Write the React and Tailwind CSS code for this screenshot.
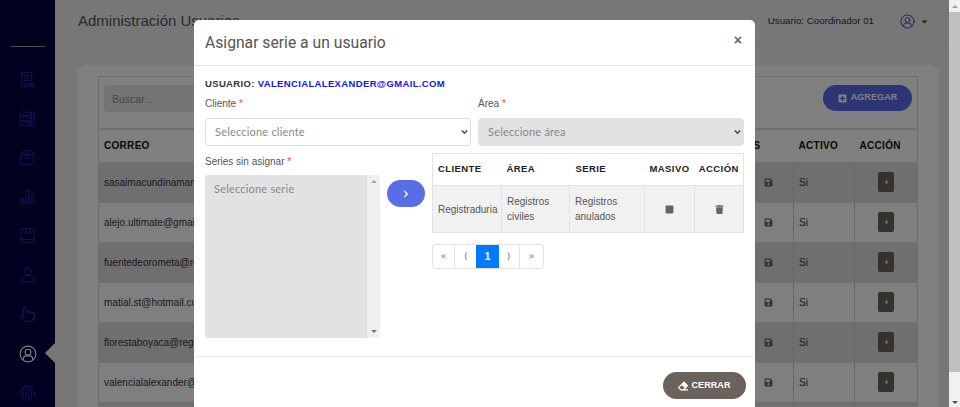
import { Pointer, Fingerprint } from 'lucide-react'
import { FaEraser, FaPlusSquare, FaTrash, FaStop, FaSave, FaCaretLeft, FaChevronRight, FaCaretDown } from 'react-icons/fa'

const users = [
  'sasaimacundinamarca@registraduria.gov.co',
  'alejo.ultimate@gmail.com',
  'fuentedeorometa@registraduria.gov.co',
  'matial.st@hotmail.com',
  'florestaboyaca@registraduria.gov.co',
  'valencialalexander@gmail.com',
  'soporte@registraduria.gov.co',
]

function Outline({ className, sw = 1.3, children }) {
  return (
    <svg className={className} viewBox="0 0 24 24" fill="none" stroke="currentColor" strokeWidth={sw} strokeLinejoin="round" strokeLinecap="round">
      {children}
    </svg>
  )
}

function ScrollIcon({ className }) {
  return (
    <Outline className={className}>
      <path d="M4 2h14v16.5M4 2v17a3 3 0 0 0 3 3h14a0 0 0 0 0 0 0v-3.500H8" />
      <path d="M7.500 6.500h7M7.500 10h7M7.500 13.500h7" />
    </Outline>
  )
}

function RowsIcon({ className }) {
  return (
    <Outline className={className}>
      <rect x="2" y="3" width="14" height="5" />
      <rect x="2" y="10" width="14" height="5" />
      <rect x="2" y="17" width="14" height="5" />
      <rect x="18.500" y="3" width="3" height="19" />
    </Outline>
  )
}

function BoxIcon({ className }) {
  return (
    <Outline className={className}>
      <path d="M3 8l3.500-5.500h11L21 8v13.500H3z" />
      <path d="M3 8h18M12 2.500V8M9 8v5h6V8" />
    </Outline>
  )
}

function BarsIcon({ className }) {
  return (
    <Outline className={className}>
      <rect x="3" y="15" width="3.600" height="7" />
      <rect x="10.200" y="3" width="3.600" height="19" />
      <rect x="17.400" y="9" width="3.600" height="13" />
    </Outline>
  )
}

function BookIcon({ className }) {
  return (
    <Outline className={className}>
      <path d="M3 2.500h18v19H5a2 2 0 0 1-2-2z" />
      <path d="M3 17.500h18M9 2.500V10l3-2 3 2V2.500" />
    </Outline>
  )
}

function PersonIcon({ className }) {
  return (
    <Outline className={className}>
      <circle cx="12" cy="7.500" r="5" />
      <path d="M3 22v-2.500a6 6 0 0 1 6-6h6a6 6 0 0 1 6 6V22z" />
    </Outline>
  )
}

function AccountIcon({ className, sw = 1.5 }) {
  return (
    <Outline className={className} sw={sw}>
      <circle cx="12" cy="12" r="10.500" />
      <circle cx="12" cy="9.500" r="3.800" />
      <path d="M5.800 19.500v-1a3.800 3.800 0 0 1 3.800-4h4.800a3.800 3.800 0 0 1 3.800 4v1" />
    </Outline>
  )
}

function Sidebar() {
  const icon = 'w-[17px] h-[17px] text-[#2a2ab8]'
  return (
    <aside className="w-[55px] shrink-0 bg-[#00003e] flex flex-col items-center h-full relative">
      <div className="mt-[46px] w-[34px] h-px bg-[#9a9a9a] mb-[24px]" />
      <div className="flex flex-col items-center gap-[22.1px]">
        <ScrollIcon className={icon} />
        <RowsIcon className={icon} />
        <BoxIcon className={icon} />
        <BarsIcon className={icon} />
        <BookIcon className={icon} />
        <PersonIcon className={icon} />
        <Pointer className={icon} strokeWidth={1.5} />
        <AccountIcon className="w-[18px] h-[18px] text-white" />
        <Fingerprint className={icon} strokeWidth={1.5} />
      </div>
      {/* notch of the active item */}
      <div className="absolute right-0 top-[343px] w-0 h-0 border-y-[10px] border-y-transparent border-r-[10px] border-r-[#efefef]" />
    </aside>
  )
}

function UsersCard() {
  return (
    <div className="mt-[21px] ml-[22px] mr-[10px] bg-white rounded-t-[10px] px-[21px] pt-[11px]">
      <div className="border border-[#dcdcdc] border-b-2 h-[54px] flex items-start justify-between pt-[8px] pl-[5px] pr-[5px]">
        <input placeholder="Buscar..." className="w-[300px] h-[27px] bg-[#e9e9e9] rounded px-2 text-[10.5px] placeholder:text-[#8a8a8a]" />
        <button className="w-[89px] h-[26px] rounded-full bg-[#5a6de8] text-white text-[9px] font-bold tracking-[0.1px] flex items-center justify-center gap-[4px]">
          <FaPlusSquare className="w-[9px] h-[9px]" /> AGREGAR
        </button>
      </div>
      <table className="w-[819px] table-fixed border-collapse border-x border-[#dcdcdc] text-[10px] text-[#333]">
        <colgroup>
          <col className="w-[602px]" />
          <col className="w-[93px]" />
          <col className="w-[61px]" />
          <col className="w-[63px]" />
        </colgroup>
        <thead>
          <tr className="h-[32px] text-[#111] font-bold tracking-[0.3px]">
            <th className="text-left pl-[5px]">CORREO</th>
            <th className="text-right pr-[33px]">SERIES</th>
            <th className="text-left pl-[5px]">ACTIVO</th>
            <th className="text-left pl-[5px]">ACCIÓN</th>
          </tr>
        </thead>
        <tbody>
          {users.map((u, i) => (
            <tr key={u} className={`h-[40px] border-t border-[#dcdcdc] ${i % 2 === 0 ? 'bg-[#dedede]' : 'bg-white'}`}>
              <td className="pl-[5px]">{u}</td>
              <td className="pr-[20px] border-r border-[#d2d2d2]">
                <FaSave className="w-[9px] h-[9px] ml-auto text-[#6b635b]" />
              </td>
              <td className="pl-[5px] border-r border-[#d2d2d2]">Si</td>
              <td>
                <div className="w-[16px] h-[20px] mx-auto bg-[#6b635b] rounded-[2px] flex items-center justify-center">
                  <FaCaretLeft className="w-[8px] h-[8px] text-[#ddd]" />
                </div>
              </td>
            </tr>
          ))}
        </tbody>
      </table>
    </div>
  )
}

function SelectBox({ disabled, text }) {
  return (
    <div className="relative mt-[9px] w-[266px]">
      <select
        disabled={disabled}
        className={`appearance-none block h-[28px] w-full rounded-[4px] pl-[9px] text-[11px] text-[#888] font-['Lato',sans-serif] tracking-[0.2px] border ${disabled ? 'bg-[#e2e2e2] border-[#e2e2e2]' : 'bg-white border-[#ddd]'}`}
      >
        <option>{text}</option>
      </select>
      <svg className="absolute right-[3px] top-[11px] w-[7px] h-[6px] text-[#444] pointer-events-none" viewBox="0 0 7 6" fill="none" stroke="currentColor" strokeWidth="1.4">
        <path d="M0.8 1.5L3.5 4.2L6.2 1.5" />
      </svg>
    </div>
  )
}

function AsignarModal() {
  const labelCls = 'block text-[10px] text-[#555] leading-none'
  return (
    <div className="absolute inset-0 bg-black/50 overflow-hidden z-10">
      <div className="w-[561px] mx-auto mt-[20px] bg-white rounded-t-[5px]">
        <div className="h-[46px] border-b border-[#e5e5e5] flex items-center justify-between pl-[11px] pr-[13px]">
          <h5 className="text-[15.7px] text-[#555] font-['Roboto',sans-serif]">Asignar serie a un usuario</h5>
          <span className="text-[14px] font-bold text-[#666] leading-none mb-[6px]">×</span>
        </div>
        <div className="pl-[11px] pr-[11px] h-[290px]">
          <p className="pt-[11px] text-[9.5px] font-bold tracking-[0.35px] text-[#333] leading-[13px]">
            USUARIO: <span className="text-[#1414ee]">VALENCIALALEXANDER@GMAIL.COM</span>
          </p>
          <div className="flex gap-[7px] mt-[9px]">
            <div>
              <label className={labelCls}>Cliente <span className="text-[#f44]">*</span></label>
              <SelectBox text="Seleccione cliente" />
            </div>
            <div>
              <label className={labelCls}>Área <span className="text-[#f44]">*</span></label>
              <SelectBox disabled text="Seleccione área" />
            </div>
          </div>
          <div className="flex mt-[7px]">
            <div className="w-[175px] mt-[4px]">
              <label className={labelCls}>Series sin asignar <span className="text-[#f44]">*</span></label>
              <div className="mt-[8px] h-[163px] flex rounded-[3px] bg-[#e2e2e2] overflow-hidden">
                <div className="flex-1 pl-[9px] pt-[7px] text-[11px] leading-[14px] text-[#888] font-['Lato',sans-serif] tracking-[0.2px]">Seleccione serie</div>
                <div className="w-[13px] bg-[#f0f0f0] flex flex-col justify-between items-center py-[5px]">
                  <div className="w-0 h-0 border-x-[3px] border-x-transparent border-b-[3px] border-b-[#a3a3a3]" />
                  <div className="w-0 h-0 border-x-[3px] border-x-transparent border-t-[3px] border-t-[#777]" />
                </div>
              </div>
            </div>
            <button className="w-[38px] h-[27px] ml-[7px] mr-[7px] mt-[27px] rounded-full bg-[#5a6de8] text-white flex items-center justify-center">
              <FaChevronRight className="w-[8px] h-[8px]" />
            </button>
            <div className="w-[311px]">
              <table className="w-full table-fixed border-collapse border border-[#e3e3e3] text-[10px] text-[#555]">
                <colgroup>
                  <col className="w-[69px]" />
                  <col className="w-[68px]" />
                  <col className="w-[75px]" />
                  <col className="w-[50px]" />
                  <col className="w-[49px]" />
                </colgroup>
                <thead>
                  <tr className="h-[32px] text-[#222] font-bold text-[9.5px] tracking-[0.4px]">
                    <th className="text-left pl-[5px]">CLIENTE</th>
                    <th className="text-left pl-[5px]">ÁREA</th>
                    <th className="text-left pl-[6px]">SERIE</th>
                    <th className="text-center">MASIVO</th>
                    <th className="text-center">ACCIÓN</th>
                  </tr>
                </thead>
                <tbody>
                  <tr className="h-[47px] bg-[#f1f1f1] border-t border-[#e3e3e3] leading-[15px]">
                    <td className="pl-[5px] border-r border-[#e3e3e3]">Registraduria</td>
                    <td className="pl-[5px] border-r border-[#e3e3e3]">Registros civiles</td>
                    <td className="pl-[5px] border-r border-[#e3e3e3]">Registros anulados</td>
                    <td className="border-r border-[#e3e3e3]"><FaStop className="w-[9px] h-[9px] mx-auto text-[#6b635b]" /></td>
                    <td><FaTrash className="w-[9px] h-[9px] mx-auto text-[#6b635b]" /></td>
                  </tr>
                </tbody>
              </table>
              <div className="mt-[11px] inline-flex h-[25px] border border-[#e3e3e3] rounded-[3px] text-[9px] text-[#666] overflow-hidden">
                <span className="w-[22px] flex items-center justify-center border-r border-[#e3e3e3]">«</span>
                <span className="w-[21px] flex items-center justify-center">⟨</span>
                <span className="w-[23px] flex items-center justify-center bg-[#007bff] text-white font-bold text-[10px]">1</span>
                <span className="w-[21px] flex items-center justify-center border-r border-[#e3e3e3]">⟩</span>
                <span className="w-[23px] flex items-center justify-center">»</span>
              </div>
            </div>
          </div>
        </div>
        <div className="border-t border-[#eee] h-[70px] flex justify-end pt-[15px] pr-[9px]">
          <button className="w-[83px] h-[27px] rounded-full bg-[#6b635b] text-white text-[9px] font-bold tracking-[0.1px] flex items-center justify-center gap-[3px]">
            <FaEraser className="w-[10px] h-[10px]" /> CERRAR
          </button>
        </div>
      </div>
    </div>
  )
}

function App() {
  return (
    <div className="h-screen overflow-hidden flex font-['Liberation_Sans',sans-serif]">
      <div className="relative flex-1 flex overflow-hidden bg-[#efefef]">
        <Sidebar />
        <main className="flex-1 min-w-0">
          <header className="h-[44px] border-b border-[#e2e2e2] flex items-center justify-between pl-[23px] pr-[20px]">
            <h1 className="text-[15px] text-[#555]">Administración Usuarios</h1>
            <div className="flex items-center text-[9.75px] text-[#333]">
              <span>Usuario: Coordinador 01</span>
              <AccountIcon className="w-[15px] h-[15px] ml-[26px] text-[#3030e0]" sw={1.4} />
              <FaCaretDown className="w-[9px] h-[9px] ml-[5px] text-[#444]" />
            </div>
          </header>
          <UsersCard />
        </main>
        <AsignarModal />
      </div>
      {/* browser scrollbar */}
      <div className="w-[11px] shrink-0 bg-[#f1f1f1] flex flex-col items-center">
        <div className="h-[12px] flex items-center"><div className="w-0 h-0 border-x-[3px] border-x-transparent border-b-[3px] border-b-[#a3a3a3]" /></div>
        <div className="w-full flex-1 bg-[#c1c1c1]" />
        <div className="h-[35px] flex items-end pb-[3px]"><div className="w-0 h-0 border-x-[3px] border-x-transparent border-t-[3px] border-t-[#505050]" /></div>
      </div>
    </div>
  )
}

export default App
